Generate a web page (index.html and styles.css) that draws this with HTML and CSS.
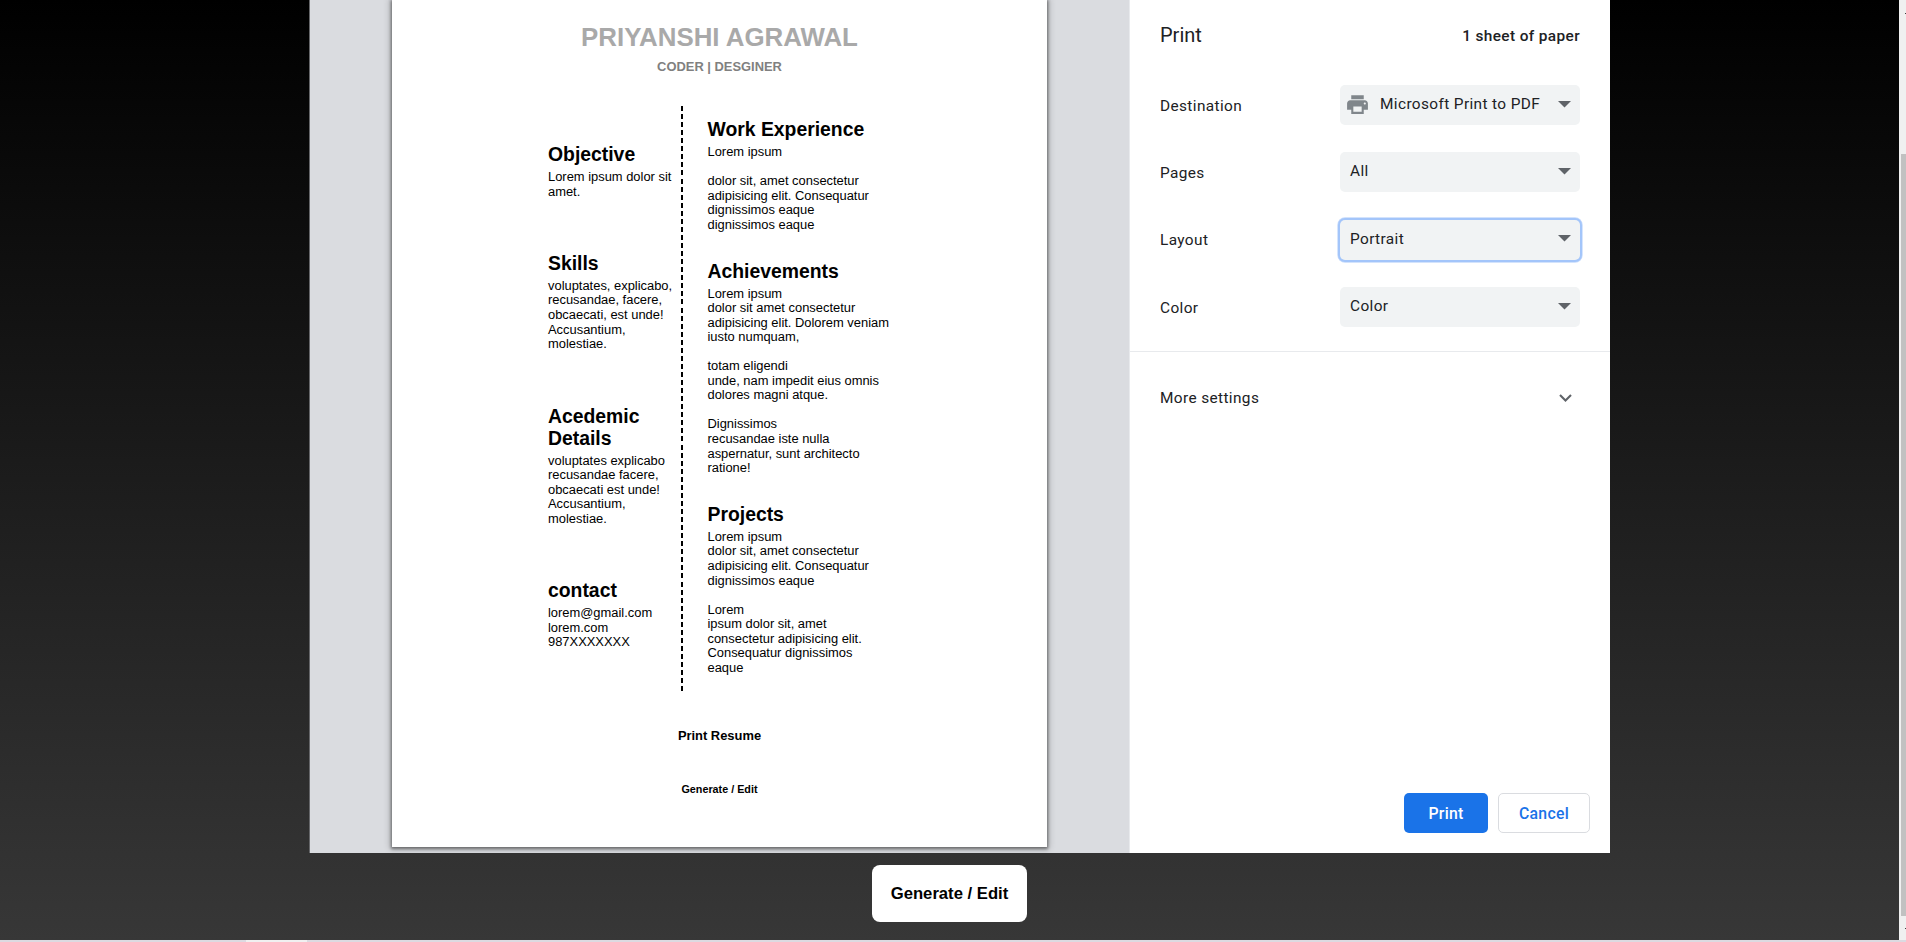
FILE: index.html
```html
<!DOCTYPE html>
<html lang="en">
<head>
<meta charset="utf-8">
<title>Resume - Print</title>
<link rel="stylesheet" href="styles.css">
</head>
<body>
<div class="window">
  <div class="viewport">
    <main class="backdrop">
      <section class="dialog">
        <div class="preview">
          <article class="sheet">
            <h1 class="name">PRIYANSHI AGRAWAL</h1>
            <p class="role">CODER | DESGINER</p>
            <div class="columns">
              <div class="col col-left">
                <section><h2>Objective</h2><p>Lorem ipsum dolor sit<br>amet.</p></section>
                <section><h2>Skills</h2><p>voluptates, explicabo,<br>recusandae, facere,<br>obcaecati, est unde!<br>Accusantium,<br>molestiae.</p></section>
                <section><h2>Acedemic<br>Details</h2><p>voluptates explicabo<br>recusandae facere,<br>obcaecati est unde!<br>Accusantium,<br>molestiae.</p></section>
                <section><h2>contact</h2><p>lorem@gmail.com<br>lorem.com<br>987XXXXXXX</p></section>
              </div>
              <div class="rule"></div>
              <div class="col col-right">
                <section><h2>Work Experience</h2><p>Lorem ipsum<br><br>dolor sit, amet consectetur<br>adipisicing elit. Consequatur<br>dignissimos eaque<br>dignissimos eaque</p></section>
                <section><h2>Achievements</h2><p>Lorem ipsum<br>dolor sit amet consectetur<br>adipisicing elit. Dolorem veniam<br>iusto numquam,<br><br>totam eligendi<br>unde, nam impedit eius omnis<br>dolores magni atque.<br><br>Dignissimos<br>recusandae iste nulla<br>aspernatur, sunt architecto<br>ratione!</p></section>
                <section><h2>Projects</h2><p>Lorem ipsum<br>dolor sit, amet consectetur<br>adipisicing elit. Consequatur<br>dignissimos eaque<br><br>Lorem<br>ipsum dolor sit, amet<br>consectetur adipisicing elit.<br>Consequatur dignissimos<br>eaque</p></section>
              </div>
            </div>
            <p class="print-resume">Print Resume</p>
            <p class="sheet-edit">Generate / Edit</p>
          </article>
        </div>
        <aside class="sidebar">
          <header class="side-head"><span class="side-title">Print</span><span class="sheets">1 sheet of paper</span></header>
          <div class="settings">
            <div class="row"><span class="label">Destination</span>
              <div class="select with-icon">
                <svg class="printer" viewBox="0 0 24 24"><path fill="#80868b" d="M19 8H5c-1.66 0-3 1.34-3 3v6h4v4h12v-4h4v-6c0-1.66-1.34-3-3-3zm-3 11H8v-5h8v5zm3-7c-.55 0-1-.45-1-1s.45-1 1-1 1 .45 1 1-.45 1-1 1zm-1-9H6v4h12V3z"/></svg>
                <span class="value">Microsoft Print to PDF</span>
                <svg class="arrow" viewBox="0 0 13 7"><path d="M0 0h13L6.500 6.500z"/></svg>
              </div></div>
            <div class="row"><span class="label">Pages</span><div class="select"><span class="value">All</span><svg class="arrow" viewBox="0 0 13 7"><path d="M0 0h13L6.500 6.500z"/></svg></div></div>
            <div class="row"><span class="label">Layout</span><div class="select focused"><span class="value">Portrait</span><svg class="arrow" viewBox="0 0 13 7"><path d="M0 0h13L6.500 6.500z"/></svg></div></div>
            <div class="row"><span class="label">Color</span><div class="select"><span class="value">Color</span><svg class="arrow" viewBox="0 0 13 7"><path d="M0 0h13L6.500 6.500z"/></svg></div></div>
          </div>
          <div class="more"><span>More settings</span><svg class="chevron" viewBox="0 0 13 8"><path d="M1 1l5.500 5.500L12 1" fill="none" stroke="#5f6368" stroke-width="2.100"/></svg></div>
          <footer class="actions"><button class="btn primary">Print</button><button class="btn outline">Cancel</button></footer>
        </aside>
      </section>
      <button class="generate">Generate / Edit</button>
    </main>
    <div class="scrollbar"><i class="mark"></i><div class="thumb"></div><i class="mark"></i></div>
  </div>
  <div class="strip"><div class="strip-tab"></div></div>
</div>
</body>
</html>
```

FILE: styles.css
```css
* { box-sizing: border-box; }
body { margin: 0; overflow: hidden; font-family: "Liberation Sans", Arial, sans-serif; }
h1, h2, p { margin: 0; }
button { font: inherit; border: 0; padding: 0; }

.window { width: 1906px; height: 942px; display: flex; flex-direction: column; overflow: hidden; }
.viewport { display: flex; height: 940px; }
.backdrop {
  width: 1899px; display: flex; flex-direction: column; align-items: center; gap: 12px;
  background: linear-gradient(#000, #373737);
}

/* Print dialog */
.dialog { display: flex; width: 1301px; height: 853px; margin-left: 20px; border-left: 1px solid #66676a; background: #fff; }
.preview { width: 820px; padding-left: 82px; background: #dadce0; border-right: 1px solid #e8eaed; overflow: hidden; }
.sheet {
  width: 655px; height: 847px; padding-top: 22px; background: #fff; color: #000;
  box-shadow: 0 1px 3px 1px rgba(0,0,0,.45), 0 0 7px 2px rgba(0,0,0,.2);
  font-size: 12.92px; line-height: 14.55px; text-align: center;
}
.name { font-size: 25.86px; line-height: 30px; color: #a9a9a9; }
.role { margin-top: 8px; font-weight: bold; color: #808080; }
.columns { display: flex; height: 585px; margin-top: 31.450px; padding-left: 156px; text-align: left; white-space: nowrap; }
.col { display: flex; flex-direction: column; }
.col-left { width: 133.300px; padding-top: 37.200px; gap: 52.950px; }
.col-right { padding: 12.200px 0 0 24.200px; gap: 27.400px; }
.col h2 { font-size: 19.37px; line-height: 22.300px; margin-bottom: 4.550px; }
.rule { width: 2px; background: repeating-linear-gradient(#000 0 5px, transparent 5px 8.06px); }
.print-resume { margin-top: 38.200px; font-weight: bold; }
.sheet-edit { margin-top: 39.400px; font-size: 10.78px; line-height: 12.400px; font-weight: bold; }

/* Settings column */
.sidebar { width: 480px; display: flex; flex-direction: column; background: #fff; color: #202124; font-family: Roboto, sans-serif; font-size: 15.400px; letter-spacing: .38px; }
.side-head { display: flex; justify-content: space-between; align-items: flex-start; height: 85px; padding: 23px 30px 0; }
.side-title { font-size: 20px; letter-spacing: 0; }
.sheets { font-weight: 500; line-height: 18px; margin-top: 4px; }
.settings { height: 267px; padding: 0 30px; display: flex; flex-direction: column; gap: 27.450px; border-bottom: 1px solid #e8eaed; }
.row { display: flex; align-items: center; justify-content: space-between; height: 40px; }
.label { padding-top: 1px; }
.select { display: flex; align-items: center; width: 240px; height: 40px; padding: 0 9px 2px 10px; border-radius: 5px; background: #f1f3f4; }
.select.with-icon { padding-left: 5px; }
.select.focused { box-shadow: 0 0 0 2px #a3c5fa, 0 0 0 2.700px #c5dafc; }
.value { flex: 1; white-space: nowrap; }
.printer { width: 25px; height: 25px; margin: 1px 10px 0 0; }
.arrow { width: 13px; height: 7px; fill: #5f6368; }
.more { display: flex; justify-content: space-between; align-items: center; padding: 0 38px 0 30px; height: 91px; }
.chevron { width: 13px; height: 8px; }
.actions { display: flex; justify-content: flex-end; gap: 10px; margin-top: auto; padding: 0 20px 20px; }
.btn { height: 40px; border-radius: 5px; font-size: 15.800px; font-weight: 500; letter-spacing: .3px; }
.primary { width: 84px; background: #1a73e8; color: #fff; }
.outline { width: 92px; background: #fff; color: #1a73e8; border: 1px solid #dadce0; }

.generate { width: 155px; height: 57px; border-radius: 8px; background: #fff; color: #000; font-weight: bold; font-size: 16.670px; }

/* Window edges */
.scrollbar { width: 7px; display: flex; flex-direction: column; align-items: flex-end; background: #f0f0f0; }
.mark { width: 1px; height: 1px; background: #404040; }
.mark:first-child { margin: 13px 0 140px; }
.mark:last-child { margin-top: 12px; }
.thumb { width: 5px; height: 762px; background: #c1c1c1; }
.strip { height: 2px; padding-left: 246px; background: #dcdae1; }
.strip-tab { width: 61px; height: 2px; background: #f0f0f0; }
```
